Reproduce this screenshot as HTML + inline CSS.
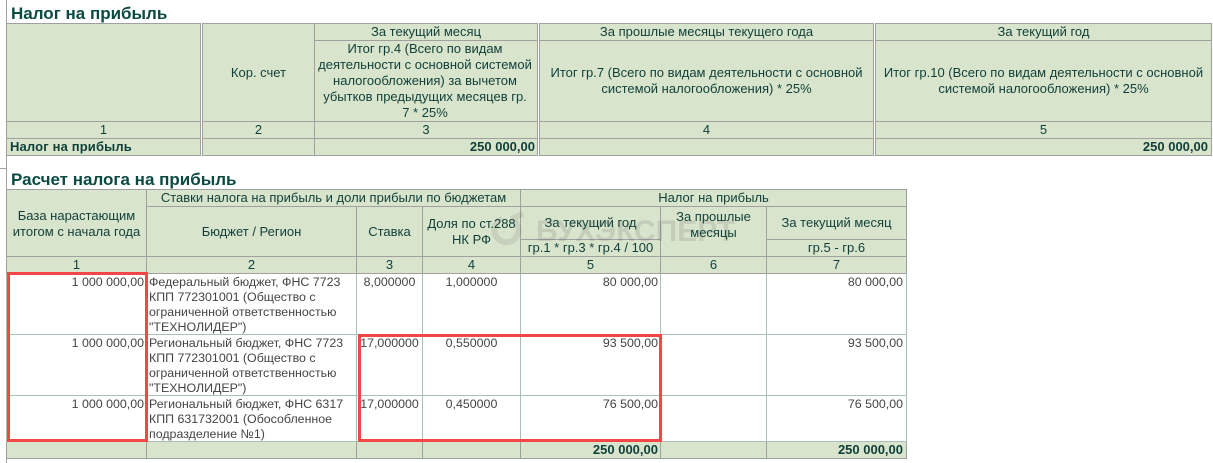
<!DOCTYPE html>
<html lang="ru"><head><meta charset="utf-8"><title>Налог на прибыль</title>
<style>
html,body{margin:0;padding:0;background:#fff;width:1213px;height:463px;overflow:hidden}
body{position:relative;font-family:"Liberation Sans",Arial,sans-serif;font-size:13px;color:#0f3f38}
h2{position:absolute;left:11px;margin:0;font-size:17px;line-height:20px;font-weight:bold;color:#0a4a42;white-space:nowrap}
table{position:absolute;border-collapse:collapse;table-layout:fixed;left:6px}
td{border:1px solid #a0a0a0;background:#d9e4cd;padding:0 1px;text-align:center;line-height:16px;overflow:hidden;box-sizing:border-box}
td.db{border-right:3px double #a0a0a0}
td.r{text-align:right;padding-right:3px}
td.r2{padding-right:2px}
td.b{font-weight:bold}
td.l{text-align:left;padding-left:3px;letter-spacing:.15px}
.w td{background:#fff;border-color:#a8c0b8;color:#444;line-height:15px;vertical-align:top;padding-top:0;font-size:12.4px}
.w td.l{padding-left:2px;padding-right:0;letter-spacing:0}
.w td span{position:relative;top:1px}
.box{position:absolute;border:3px solid #f44547;box-sizing:border-box}
.ln{position:absolute;background:#a0a0a0}
.wm{position:absolute;left:536px;top:213px;font-size:30px;line-height:38px;font-weight:bold;color:rgba(70,70,70,.14);white-space:nowrap}
svg{position:absolute}
</style></head><body>
<div class="ln" style="left:6px;top:0;width:1px;height:463px"></div>
<div class="ln" style="left:0;top:168px;width:6px;height:1px"></div>
<h2 style="top:4px">Налог на прибыль</h2>
<table style="top:23px;width:1205px">
<colgroup><col style="width:195px"><col style="width:113px"><col style="width:224px"><col style="width:336px"><col style="width:337px"></colgroup>
<tr style="height:17px"><td rowspan="2" class="db"></td><td rowspan="2">Кор. счет</td><td class="db">За текущий месяц</td><td class="db">За прошлые месяцы текущего года</td><td>За текущий год</td></tr>
<tr style="height:81px"><td class="db" style="padding:0 4px 0 2px">Итог гр.4 (Всего по видам деятельности с основной системой налогообложения) за вычетом убытков предыдущих месяцев гр.<br>7 * 25%</td><td class="db">Итог гр.7 (Всего по видам деятельности с основной системой налогообложения) * 25%</td><td>Итог гр.10 (Всего по видам деятельности с основной системой налогообложения) * 25%</td></tr>
<tr style="height:17px"><td class="db">1</td><td>2</td><td class="db">3</td><td class="db">4</td><td>5</td></tr>
<tr style="height:17px"><td class="db l b">Налог на прибыль</td><td></td><td class="db r r2 b">250 000,00</td><td class="db"></td><td class="r b">250 000,00</td></tr>
</table>
<h2 style="top:170px">Расчет налога на прибыль</h2>
<table style="top:189px;width:900px">
<colgroup><col style="width:140px"><col style="width:210px"><col style="width:66px"><col style="width:98px"><col style="width:140px"><col style="width:106px"><col style="width:140px"></colgroup>
<tr style="height:17px"><td rowspan="3" style="padding-top:1px">База нарастающим итогом с начала года</td><td colspan="3">Ставки налога на прибыль и доли прибыли по бюджетам</td><td colspan="3">Налог на прибыль</td></tr>
<tr style="height:33px"><td rowspan="2">Бюджет / Регион</td><td rowspan="2">Ставка</td><td rowspan="2">Доля по ст.288 НК РФ</td><td>За текущий год</td><td rowspan="2" style="vertical-align:top;padding-top:2px">За прошлые месяцы</td><td>За текущий месяц</td></tr>
<tr style="height:17px"><td>гр.1 * гр.3 * гр.4 / 100</td><td>гр.5 - гр.6</td></tr>
<tr style="height:17px"><td>1</td><td>2</td><td>3</td><td>4</td><td>5</td><td>6</td><td>7</td></tr>
<tr class="w" style="height:61px"><td class="r r2"><span>1 000 000,00</span></td><td class="l"><span>Федеральный бюджет, ФНС 7723 КПП 772301001 (Общество с ограниченной ответственностью "ТЕХНОЛИДЕР")</span></td><td><span>8,000000</span></td><td><span>1,000000</span></td><td class="r r2"><span>80 000,00</span></td><td></td><td class="r"><span>80 000,00</span></td></tr>
<tr class="w" style="height:61px"><td class="r r2"><span>1 000 000,00</span></td><td class="l"><span>Региональный бюджет, ФНС 7723 КПП 772301001 (Общество с ограниченной ответственностью "ТЕХНОЛИДЕР")</span></td><td><span>17,000000</span></td><td><span>0,550000</span></td><td class="r r2"><span>93 500,00</span></td><td></td><td class="r"><span>93 500,00</span></td></tr>
<tr class="w" style="height:46px"><td class="r r2"><span>1 000 000,00</span></td><td class="l"><span>Региональный бюджет, ФНС 6317 КПП 631732001 (Обособленное подразделение №1)</span></td><td><span>17,000000</span></td><td><span>0,450000</span></td><td class="r r2"><span>76 500,00</span></td><td></td><td class="r"><span>76 500,00</span></td></tr>
<tr style="height:17px"><td></td><td></td><td></td><td></td><td class="r r2 b">250 000,00</td><td></td><td class="r b">250 000,00</td></tr>
</table>
<svg style="left:480px;top:210px" width="50" height="40" viewBox="0 0 50 40"><path d="M31 9 A12 12 0 1 1 22 9 M31 9 L43 4" fill="none" stroke="rgba(70,70,70,.12)" stroke-width="6"/></svg>
<div class="wm">БУХЭКСПЕРТ</div>
<div class="box" style="left:7px;top:272px;width:141px;height:170px"></div>
<div class="box" style="left:358px;top:334px;width:304px;height:108px"></div>
</body></html>
